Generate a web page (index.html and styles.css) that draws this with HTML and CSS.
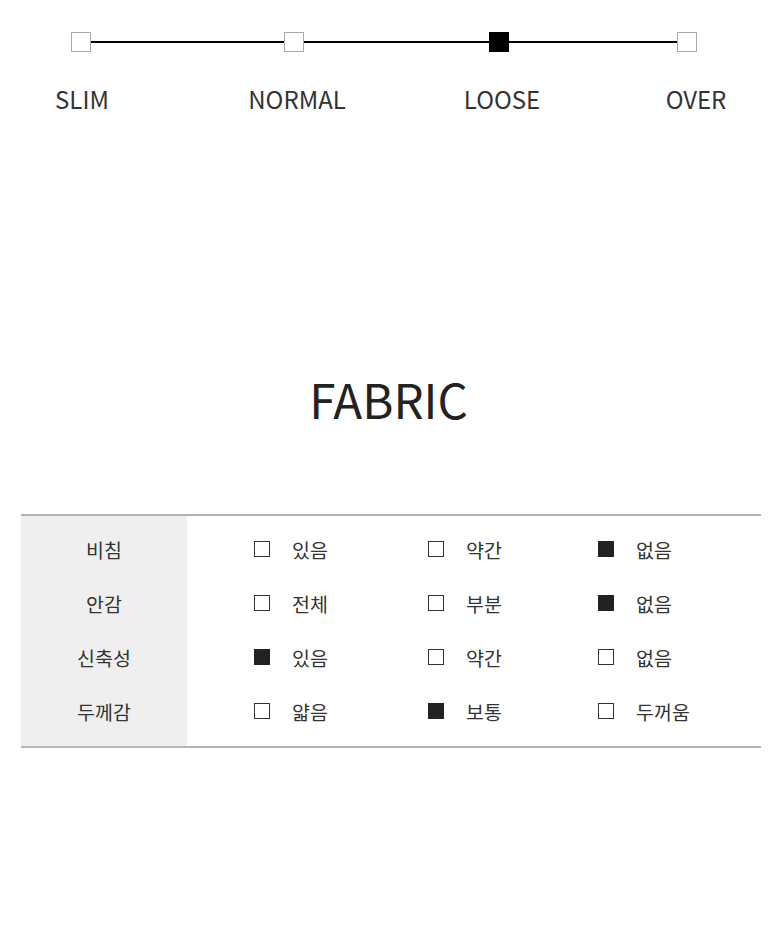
FILE: index.html
```html
<!DOCTYPE html>
<html lang="ko">
<head>
<meta charset="utf-8">
<link rel="stylesheet" href="styles.css">
</head>
<body>
<section class="fit">
  <div class="track">
    <div class="line"></div>
    <span class="mark m1"></span>
    <span class="mark m2"></span>
    <span class="mark m3 on"></span>
    <span class="mark m4"></span>
  </div>
  <div class="labels">
    <span class="lbl l1">SLIM</span>
    <span class="lbl l2">NORMAL</span>
    <span class="lbl l3">LOOSE</span>
    <span class="lbl l4">OVER</span>
  </div>
</section>

<h2 class="title">FABRIC</h2>

<div class="fabric">
  <div class="head">
    <div class="hcell">비침</div>
    <div class="hcell">안감</div>
    <div class="hcell">신축성</div>
    <div class="hcell">두께감</div>
  </div>
  <div class="body">
    <div class="row">
      <div class="opt"><i class="box"></i><span>있음</span></div>
      <div class="opt"><i class="box"></i><span>약간</span></div>
      <div class="opt"><i class="box fill"></i><span>없음</span></div>
    </div>
    <div class="row">
      <div class="opt"><i class="box"></i><span>전체</span></div>
      <div class="opt"><i class="box"></i><span>부분</span></div>
      <div class="opt"><i class="box fill"></i><span>없음</span></div>
    </div>
    <div class="row">
      <div class="opt"><i class="box fill"></i><span>있음</span></div>
      <div class="opt"><i class="box"></i><span>약간</span></div>
      <div class="opt"><i class="box"></i><span>없음</span></div>
    </div>
    <div class="row">
      <div class="opt"><i class="box"></i><span>얇음</span></div>
      <div class="opt"><i class="box fill"></i><span>보통</span></div>
      <div class="opt"><i class="box"></i><span>두꺼움</span></div>
    </div>
  </div>
</div>
</body>
</html>
```
FILE: styles.css
```css
* { box-sizing: border-box; }
html, body { margin: 0; padding: 0; background: #fff; }
body {
  font-family: "Noto Sans CJK KR", "Noto Sans", sans-serif;
  color: #333;
  width: 780px;
}
.fit { padding-top: 32px; }
.track {
  position: relative;
  height: 20px;
  margin: 0 0 0 71px;
  width: 626px;
}
.line {
  position: absolute;
  left: 10px; right: 10px; top: 9px;
  height: 2px;
  background: #000;
}
.mark {
  position: absolute;
  top: 0;
  width: 20px; height: 20px;
  background: #fff;
  border: 1px solid #aaa;
}
.mark.on { background: #000; border-color: #000; }
.m1 { left: 0; }
.m2 { left: 213px; }
.m3 { left: 418px; }
.m4 { left: 606px; }
.labels {
  position: relative;
  height: 40px;
  margin-top: 32px;
  font-size: 24px;
  line-height: 30px;
}
.lbl { position: absolute; top: 0; transform: translateX(-50%); white-space: nowrap; }
.l1 { left: 82px; }
.l2 { left: 297px; }
.l3 { left: 502px; }
.l4 { left: 696px; }

.title {
  margin: 0;
  padding: 245px 3px 0 0;
  text-align: center;
  font-weight: 400;
  font-size: 47.5px;
  line-height: 60px;
  color: #222;
  letter-spacing: 0;
}
.fabric {
  display: grid;
  grid-template-columns: 166px 1fr;
  margin: 85px 19px 0 21px;
  border-top: 2px solid #b4b4b4;
  border-bottom: 2px solid #b4b4b4;
  font-size: 19.5px;
}
.head {
  background: #efefef;
  padding: 6px 0 8px;
}
.hcell {
  height: 54px;
  display: flex;
  align-items: center;
  justify-content: center;
}
.body { padding: 6px 0 8px 67px; }
.row {
  height: 54px;
  display: grid;
  grid-template-columns: 174px 170px 1fr;
  align-items: center;
}
.opt { display: flex; align-items: center; }
.box {
  width: 16px; height: 16px;
  border: 1px solid #333;
  background: #fff;
  margin-right: 22px;
  flex: none;
}
.box.fill { background: #222; border-color: #222; }
```
